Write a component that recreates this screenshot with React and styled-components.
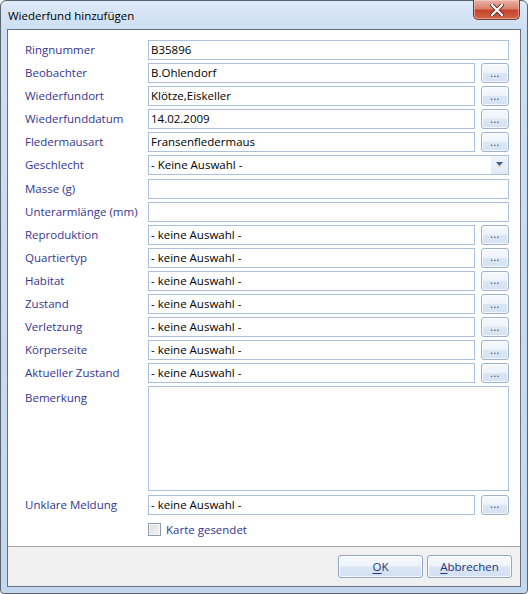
import React from "react";
import styled, { createGlobalStyle } from "styled-components";

const GlobalStyle = createGlobalStyle`
    html, body {
        margin: 0;
        padding: 0;
        background: #ffffff;
    }
    * {
        box-sizing: border-box;
    }
`;

const FONT = `"Segoe UI", "Open Sans", "Noto Sans", sans-serif`;
const LABEL = "#35358f";

//window frame
const Window = styled.div`
    width: 528px;
    height: 594px;
    border: 1px solid #59636f;
    border-radius: 6px 6px 4px 4px;
    background: linear-gradient(180deg, #dce9f7 0px, #cddff3 28px, #c3d7ee 100%);
    padding: 0 6px 6px 6px;
    display: flex;
    flex-direction: column;
    font-family: ${FONT};
    font-size: 11.5px;
`;

const TitleBar = styled.div`
    height: 28px;
    display: flex;
    justify-content: space-between;
    align-items: flex-start;
`;

const Title = styled.div`
    padding: 7px 0 0 1px;
    font-size: 11.5px;
    color: #000000;
`;

const CloseButton = styled.div`
    width: 47px;
    height: 20px;
    margin-top: -1px;
    margin-right: 1px;
    border: 1px solid #6e3a30;
    border-top: none;
    border-radius: 0 0 5px 5px;
    background: linear-gradient(180deg, #eab3a6 0%, #d9826f 45%, #c7452c 55%, #cf6547 100%);
    box-shadow: inset 0 0 0 1px rgba(255, 220, 210, 0.5);
    display: flex;
    align-items: center;
    justify-content: center;
`;

const Client = styled.div`
    flex: 1;
    border: 1px solid #66717e;
    display: flex;
    flex-direction: column;
    background: #f0f0f0;
`;

const Content = styled.div`
    flex: 1;
    background: #ffffff;
    border-bottom: 1px solid #a2a2a2;
    padding: 10px 11px 0 17px;
`;

const FormGrid = styled.div`
    display: grid;
    grid-template-columns: 117px 1fr 28px;
    column-gap: 6px;
    row-gap: 3.1px;
    align-items: start;
`;

const Label = styled.div`
    color: ${LABEL};
    height: 20px;
    display: flex;
    align-items: ${p => (p.$top ? "flex-start" : "center")};
    padding-top: ${p => (p.$top ? "4px" : "0")};
    padding-bottom: ${p => (p.$top ? "0" : "1px")};
    white-space: nowrap;
`;

const Field = styled.div`
    grid-column: ${p => (p.$full ? "2 / 4" : "2 / 3")};
    height: ${p => p.$height || 20}px;
    border: 1px solid #abc0dc;
    background: #ffffff;
    color: #000000;
    padding: 0 2px 1px 2px;
    display: flex;
    align-items: center;
    justify-content: space-between;
    white-space: nowrap;
    overflow: hidden;
`;

const DotsButton = styled.div`
    height: 20px;
    border: 1px solid #9fb3cc;
    border-radius: 3px;
    background: linear-gradient(180deg, #f6f9fd 0%, #eef3fa 48%, #dbe6f4 52%, #d5e2f2 100%);
    box-shadow: inset 0 0 0 1px rgba(255, 255, 255, 0.7);
    display: flex;
    align-items: center;
    justify-content: center;
    color: #1b2a55;
    font-size: 10px;
    letter-spacing: 0.5px;
    padding-bottom: 1px;
`;

const DropArrow = styled.div`
    width: 17px;
    height: 18px;
    margin-right: -2px;
    background: linear-gradient(180deg, #f0f5fb 0%, #e1eaf6 100%);
    display: flex;
    align-items: center;
    justify-content: center;
`;

const CheckRow = styled.div`
    grid-column: 2 / 4;
    display: flex;
    align-items: center;
    gap: 5px;
    margin-top: 4px;
    color: ${LABEL};
`;

const CheckBox = styled.div`
    width: 13px;
    height: 13px;
    border: 1px solid #8e9cb0;
    background: linear-gradient(135deg, #dcdcdc 0%, #f4f4f4 100%);
    box-shadow: inset 0 0 0 1px #f7f7f7;
`;

const Footer = styled.div`
    height: 39px;
    display: flex;
    justify-content: flex-end;
    align-items: center;
    gap: 4px;
    padding: 0 8px 0 0;
`;

const DialogButton = styled.div`
    width: 85px;
    height: 23px;
    border: 1px solid #93a7c2;
    border-radius: 3px;
    background: linear-gradient(180deg, #f7fafd 0%, #edf3fa 48%, #dbe6f4 52%, #d2e0f1 100%);
    box-shadow: inset 0 0 0 1px rgba(255, 255, 255, 0.8);
    color: #1f3479;
    display: flex;
    align-items: center;
    justify-content: center;
    padding-bottom: 1px;

    u {
        text-decoration-thickness: 1px;
        text-underline-offset: 2px;
    }
`;

const rows = [
    { label: "Ringnummer", value: "B35896", full: true },
    { label: "Beobachter", value: "B.Ohlendorf" },
    { label: "Wiederfundort", value: "Klötze,Eiskeller" },
    { label: "Wiederfunddatum", value: "14.02.2009" },
    { label: "Fledermausart", value: "Fransenfledermaus" },
    { label: "Geschlecht", value: "- Keine Auswahl -", full: true, combo: true },
    { label: "Masse (g)", value: "", full: true },
    { label: "Unterarmlänge (mm)", value: "", full: true },
    { label: "Reproduktion", value: "- keine Auswahl -" },
    { label: "Quartiertyp", value: "- keine Auswahl -" },
    { label: "Habitat", value: "- keine Auswahl -" },
    { label: "Zustand", value: "- keine Auswahl -" },
    { label: "Verletzung", value: "- keine Auswahl -" },
    { label: "Körperseite", value: "- keine Auswahl -" },
    { label: "Aktueller Zustand", value: "- keine Auswahl -" },
];

const CloseIcon = () => (
    <svg width="14" height="12" viewBox="0 0 14 12">
        <path d="M2 1 L12 11 M12 1 L2 11" stroke="#5a2a22" strokeWidth="4" strokeLinecap="square" />
        <path d="M2 1 L12 11 M12 1 L2 11" stroke="#ffffff" strokeWidth="2.2" strokeLinecap="square" />
    </svg>
);

const Arrow = () => (
    <svg width="7" height="5" viewBox="0 0 7 5">
        <path d="M0 0 L7 0 L3.5 4 Z" fill="#3d5c98" />
        <path d="M2 4.5 L5 4.5" stroke="#e8d890" strokeWidth="1" />
    </svg>
);

const Row = ({ label, value, full, combo }) => (
    <>
        <Label>{label}</Label>
        <Field $full={full}>
            <span>{value}</span>
            {combo ? <DropArrow><Arrow /></DropArrow> : null}
        </Field>
        {full ? null : <DotsButton>...</DotsButton>}
    </>
);

const App = () => {
    return (
        <>
            <GlobalStyle />
            <Window>
                <TitleBar>
                    <Title>Wiederfund hinzufügen</Title>
                    <CloseButton><CloseIcon /></CloseButton>
                </TitleBar>
                <Client>
                    <Content>
                        <FormGrid>
                            {rows.map(r => <Row key={r.label} {...r} />)}
                            <Label $top>Bemerkung</Label>
                            <Field $full $height={105} />
                            <Row label="Unklare Meldung" value="- keine Auswahl -" />
                            <CheckRow>
                                <CheckBox />
                                <span>Karte gesendet</span>
                            </CheckRow>
                        </FormGrid>
                    </Content>
                    <Footer>
                        <DialogButton><span><u>O</u>K</span></DialogButton>
                        <DialogButton><span><u>A</u>bbrechen</span></DialogButton>
                    </Footer>
                </Client>
            </Window>
        </>
    );
};

export default App;
